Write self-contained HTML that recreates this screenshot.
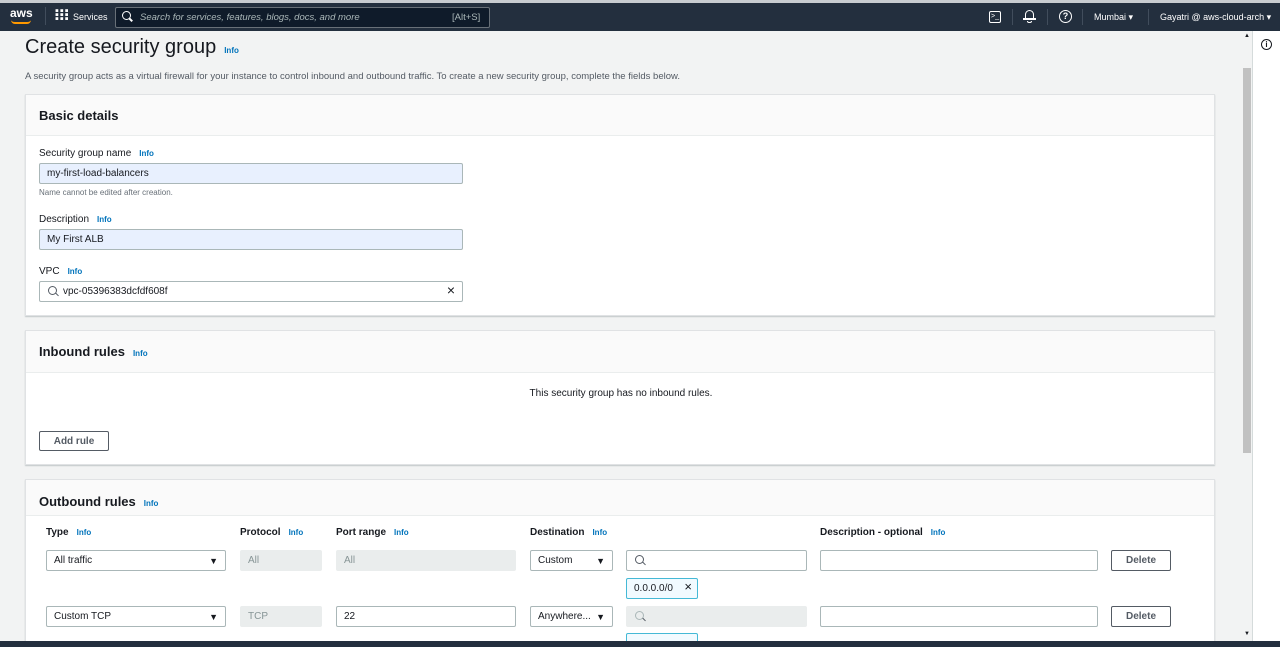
<!DOCTYPE html>
<html style="width:1280px;height:647px;overflow:hidden"><head><style>
*{box-sizing:border-box;margin:0;padding:0}
body{width:1280px;height:647px;overflow:hidden;background:#f2f3f3;font-family:"Liberation Sans",sans-serif;color:#16191f;position:relative;font-size:10px}
.top{position:absolute;left:0;top:0;width:1280px;height:31px;background:#232f3e;border-top:3px solid #c8ccd0}
.abs{position:absolute}
.w{color:#fff}
.info{color:#0073bb;font-weight:bold;font-size:8px;margin-left:8px}
.panel{position:absolute;left:25px;width:1190px;background:#fff;border:1px solid #e0e2e4;box-shadow:0 1px 1px rgba(0,28,36,.2)}
.ph{height:41px;background:#fafafa;border-bottom:1px solid #eaeded;padding:13px 13px;font-size:13px;font-weight:bold}
.lbl{position:absolute;font-size:10px}
.inp{position:absolute;height:21px;border:1px solid #aab7b8;border-radius:2px;background:#fff;font-size:10px;padding:4px 7px}
.dis{background:#eaeded;border-color:#eaeded;color:#879596}
.btn{position:absolute;height:21px;border:1px solid #545b64;border-radius:2px;background:#fff;font-weight:bold;font-size:10px;text-align:center;padding-top:4px;color:#545b64}
.arr{position:absolute;right:7px;top:5px;font-size:9px}
.mag{position:absolute;left:8px;top:4px;width:9px;height:9px;border:1.3px solid #545b64;border-radius:50%}
.mag:after{content:"";position:absolute;left:6px;top:7px;width:4px;height:1.3px;background:#545b64;transform:rotate(45deg)}
</style></head><body>
<div class="top">
 <div class="abs w" style="left:10px;top:3px;font-size:12px;font-weight:bold">aws</div>
 <div class="abs" style="left:11px;top:17px;width:20px;height:4px;border-bottom:2px solid #ff9900;border-radius:0 0 10px 10px"></div>
 <div class="abs" style="left:45px;top:4px;width:1px;height:18px;background:#414d5c"></div>
 <div class="abs w" style="left:55px;top:6px;font-size:11px;letter-spacing:1px;line-height:4px">▪▪▪<br>▪▪▪<br>▪▪▪</div>
 <div class="abs w" style="left:73px;top:9px;font-size:9px">Services</div>
 <div class="abs" style="left:115px;top:4px;width:375px;height:21px;background:#0f1b2a;border:1px solid #687078;border-radius:2px"></div>
 <div class="abs" style="left:122px;top:8px;width:9px;height:9px;border:1.5px solid #fff;border-radius:50%"></div>
 <div class="abs" style="left:129px;top:16px;width:4px;height:1.5px;background:#fff;transform:rotate(45deg)"></div>
 <div class="abs" style="left:140px;top:9px;font-size:9.5px;font-style:italic;color:#aab7b8">Search for services, features, blogs, docs, and more</div>
 <div class="abs" style="left:452px;top:9px;font-size:9.5px;color:#aab7b8">[Alt+S]</div>
 <div class="abs" style="left:989px;top:8px;width:12px;height:12px;border:1.5px solid #fff;border-radius:2px;color:#fff;font-size:7px;padding-left:1px;line-height:9px">&gt;_</div>
 <div class="abs" style="left:1012px;top:6px;width:1px;height:16px;background:#414d5c"></div>
 <div class="abs" style="left:1025px;top:7px;width:9px;height:9px;border:1.5px solid #fff;border-bottom:none;border-radius:5px 5px 0 0"></div>
 <div class="abs" style="left:1023px;top:15px;width:13px;height:1.5px;background:#fff"></div>
 <div class="abs" style="left:1027px;top:18px;width:5px;height:2px;border:1.3px solid #fff;border-top:none;border-radius:0 0 3px 3px"></div>
 <div class="abs" style="left:1047px;top:6px;width:1px;height:16px;background:#414d5c"></div>
 <div class="abs w" style="left:1059px;top:7px;width:13px;height:13px;border:1.5px solid #fff;border-radius:50%;font-size:9px;font-weight:bold;text-align:center;line-height:10px">?</div>
 <div class="abs" style="left:1082px;top:6px;width:1px;height:16px;background:#414d5c"></div>
 <div class="abs w" style="left:1094px;top:9px;font-size:9px">Mumbai ▾</div>
 <div class="abs" style="left:1148px;top:6px;width:1px;height:16px;background:#414d5c"></div>
 <div class="abs w" style="left:1160px;top:9px;font-size:9px">Gayatri @ aws-cloud-arch ▾</div>
</div>
<div class="abs" style="left:1252px;top:31px;width:28px;height:616px;background:#fff;border-left:1px solid #d5dbdb"></div>
<div class="abs" style="left:1261px;top:39px;width:11px;height:11px;border:1.3px solid #16191f;border-radius:50%;font-size:8px;font-weight:bold;text-align:center;line-height:9px">i</div>
<div class="abs" style="left:1240px;top:31px;width:12px;height:610px;background:#f2f3f3"></div>
<div class="abs" style="left:1243px;top:68px;width:8px;height:385px;background:#c1c1c1"></div>
<div class="abs" style="left:1244px;top:33px;font-size:6px">▲</div>
<div class="abs" style="left:1244px;top:631px;font-size:6px">▼</div>

<div class="abs" style="left:25px;top:36px;font-size:20px">Create security group<span class="info" style="font-size:8px">Info</span></div>
<div class="abs" style="left:25px;top:71px;font-size:9.5px;color:#545b64">A security group acts as a virtual firewall for your instance to control inbound and outbound traffic. To create a new security group, complete the fields below.</div>

<div class="panel" style="top:94px;height:222px">
 <div class="ph">Basic details</div>
 <div class="lbl" style="left:13px;top:53px">Security group name<span class="info">Info</span></div>
 <div class="inp" style="left:13px;top:68px;width:424px;background:#e8f0fe">my-first-load-balancers</div>
 <div class="lbl" style="left:13px;top:93px;font-size:8px;color:#687078">Name cannot be edited after creation.</div>
 <div class="lbl" style="left:13px;top:119px">Description<span class="info">Info</span></div>
 <div class="inp" style="left:13px;top:134px;width:424px;background:#e8f0fe">My First ALB</div>
 <div class="lbl" style="left:13px;top:171px">VPC<span class="info">Info</span></div>
 <div class="inp" style="left:13px;top:186px;width:424px;padding-left:23px">vpc-05396383dcfdf608f<span class="mag"></span><span class="abs" style="right:7px;top:0px;font-size:14px">×</span></div>
</div>

<div class="panel" style="top:330px;height:135px">
 <div class="ph" style="height:42px">Inbound rules<span class="info">Info</span></div>
 <div class="lbl" style="left:0;width:1190px;text-align:center;top:57px">This security group has no inbound rules.</div>
 <div class="btn" style="left:13px;top:100px;width:70px;height:20px">Add rule</div>
</div>

<div class="panel" style="top:479px;height:168px;overflow:hidden">
 <div class="ph" style="height:36px;padding-top:14px">Outbound rules<span class="info">Info</span></div>
 <div class="lbl" style="left:20px;top:47px;font-weight:bold">Type<span class="info">Info</span></div>
 <div class="lbl" style="left:214px;top:47px;font-weight:bold">Protocol<span class="info">Info</span></div>
 <div class="lbl" style="left:310px;top:47px;font-weight:bold">Port range<span class="info">Info</span></div>
 <div class="lbl" style="left:504px;top:47px;font-weight:bold">Destination<span class="info">Info</span></div>
 <div class="lbl" style="left:794px;top:47px;font-weight:bold">Description - optional<span class="info">Info</span></div>

 <div class="inp" style="left:20px;top:70px;width:180px">All traffic<span class="arr">▼</span></div>
 <div class="inp dis" style="left:214px;top:70px;width:82px">All</div>
 <div class="inp dis" style="left:310px;top:70px;width:180px">All</div>
 <div class="inp" style="left:504px;top:70px;width:83px">Custom<span class="arr">▼</span></div>
 <div class="inp" style="left:600px;top:70px;width:181px"><span class="mag"></span></div>
 <div class="inp" style="left:794px;top:70px;width:278px"></div>
 <div class="btn" style="left:1085px;top:70px;width:60px">Delete</div>
 <div class="inp" style="left:600px;top:98px;width:72px;background:#f1faff;border-color:#44b9d6">0.0.0.0/0 <span style="font-size:13px;position:absolute;top:0;right:5px">×</span></div>

 <div class="inp" style="left:20px;top:126px;width:180px">Custom TCP<span class="arr">▼</span></div>
 <div class="inp dis" style="left:214px;top:126px;width:82px">TCP</div>
 <div class="inp" style="left:310px;top:126px;width:180px">22</div>
 <div class="inp" style="left:504px;top:126px;width:83px">Anywhere...<span class="arr">▼</span></div>
 <div class="inp dis" style="left:600px;top:126px;width:181px"><span class="mag" style="border-color:#aab7b8"></span></div>
 <div class="inp" style="left:794px;top:126px;width:278px"></div>
 <div class="btn" style="left:1085px;top:126px;width:60px">Delete</div>
 <div class="inp" style="left:600px;top:153px;width:72px;background:#f1faff;border-color:#44b9d6"></div>
</div>
<div class="abs" style="left:0;top:641px;width:1280px;height:6px;background:#232f3e"></div>
</body></html>
